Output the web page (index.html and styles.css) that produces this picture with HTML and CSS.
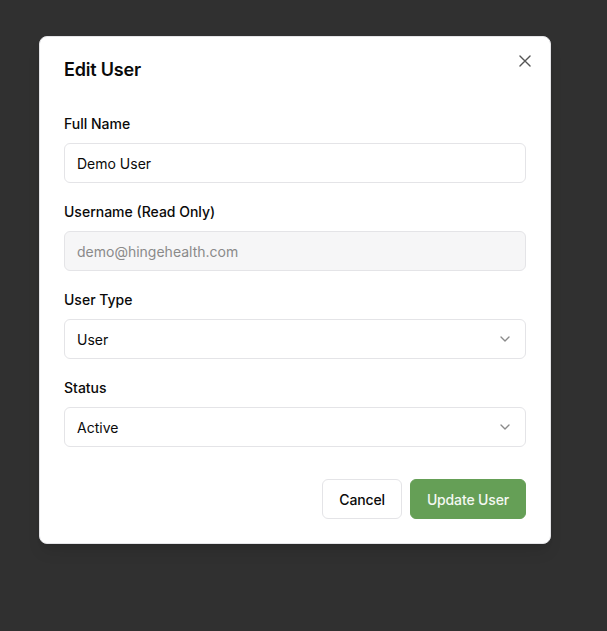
FILE: index.html
```html
<!DOCTYPE html>
<html>
<head>
<meta charset="utf-8">
<link rel="stylesheet" href="styles.css">
</head>
<body>
<div class="dialog">
  <button class="close" aria-label="Close">
    <svg viewBox="0 0 24 24" width="22" height="22" fill="none" stroke="currentColor" stroke-width="1.5" stroke-linecap="round"><path d="M17.5 6.5 6.5 17.5M6.5 6.5l11 11"/></svg>
  </button>
  <h2 class="title">Edit User</h2>
  <div class="form">
    <div class="field">
      <label class="label">Full Name</label>
      <div class="input">Demo User</div>
    </div>
    <div class="field">
      <label class="label">Username (Read Only)</label>
      <div class="input readonly">demo@hingehealth.com</div>
    </div>
    <div class="field">
      <label class="label">User Type</label>
      <div class="input select"><span>User</span>
        <svg viewBox="0 0 24 24" width="16" height="16" fill="none" stroke="currentColor" stroke-width="2" stroke-linecap="round" stroke-linejoin="round"><path d="m6 9 6 6 6-6"/></svg>
      </div>
    </div>
    <div class="field">
      <label class="label">Status</label>
      <div class="input select"><span>Active</span>
        <svg viewBox="0 0 24 24" width="16" height="16" fill="none" stroke="currentColor" stroke-width="2" stroke-linecap="round" stroke-linejoin="round"><path d="m6 9 6 6 6-6"/></svg>
      </div>
    </div>
  </div>
  <div class="footer">
    <button class="btn outline">Cancel</button>
    <button class="btn primary">Update User</button>
  </div>
</div>
</body>
</html>
```

FILE: styles.css
```css
* { box-sizing: border-box; }
html, body { margin: 0; height: 100%; }
body {
  background: #303030;
  font-family: Inter, "Noto Sans", sans-serif;
  color: #0a0a0a;
  padding: 36px 0 0 39px;
}
.dialog {
  position: relative;
  width: 512px;
  background: #fff;
  border: 1px solid #e4e4e7;
  border-radius: 8px;
  padding: 24px;
  box-shadow: 0 10px 15px -3px rgba(0,0,0,.1), 0 4px 6px -4px rgba(0,0,0,.1);
}
.close {
  position: absolute;
  top: 13px;
  right: 14px;
  width: 22px;
  height: 22px;
  padding: 0;
  border: 0;
  background: none;
  color: #555;
  display: flex;
}
.title {
  margin: 0;
  font-size: 18px;
  line-height: 18px;
  font-weight: 600;
  letter-spacing: -0.2px;
}
.form {
  margin-top: 35px;
  display: flex;
  flex-direction: column;
  gap: 19px;
}
.field {
  display: flex;
  flex-direction: column;
  gap: 9px;
}
.label {
  font-size: 14px;
  line-height: 20px;
  font-weight: 500;
}
.input {
  height: 40px;
  border: 1px solid #e4e4e7;
  border-radius: 6px;
  padding: 0 12px;
  display: flex;
  align-items: center;
  font-size: 14px;
  color: #0a0a0a;
}
.input.readonly {
  background: #f6f6f7;
  color: #8a8a8a;
}
.select {
  justify-content: space-between;
}
.select svg { color: #8a8a8a; }
.footer {
  margin-top: 32px;
  display: flex;
  justify-content: flex-end;
  gap: 8px;
}
.btn {
  height: 40px;
  padding: 0 16px;
  border-radius: 6px;
  font-family: inherit;
  font-size: 14px;
  font-weight: 500;
  letter-spacing: -0.15px;
}
.outline {
  background: #fff;
  border: 1px solid #e4e4e7;
  color: #0a0a0a;
}
.primary {
  background: #659f56;
  border: 1px solid #659f56;
  color: #f4f8f2;
}
```
